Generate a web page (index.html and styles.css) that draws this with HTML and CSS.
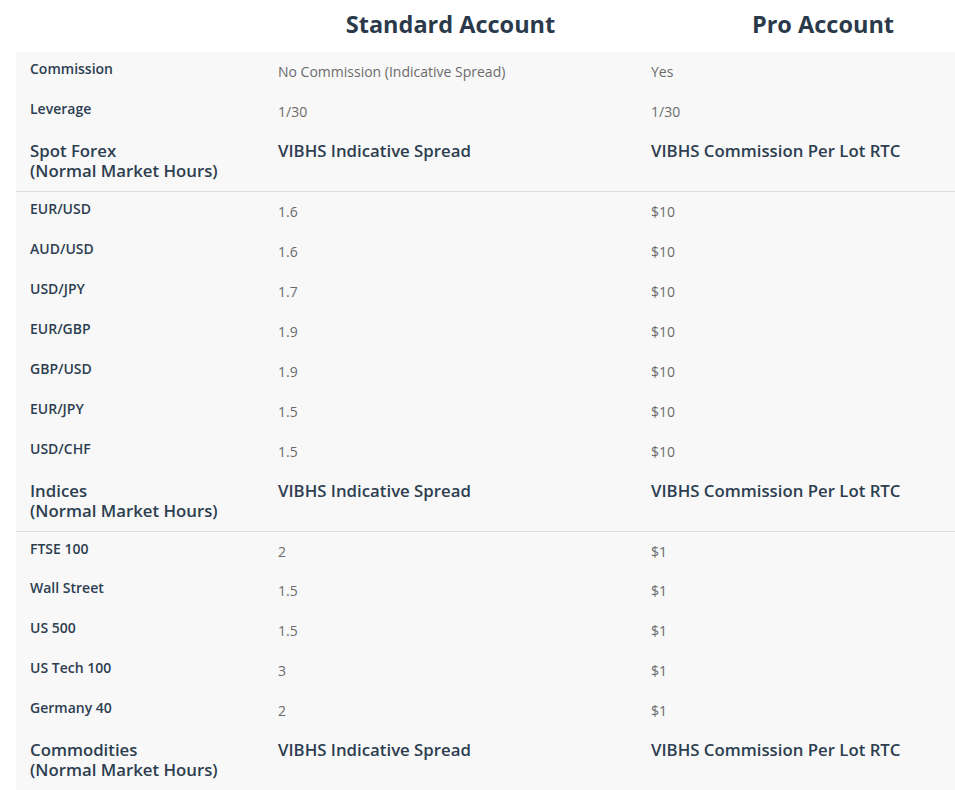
FILE: index.html
```html
<!DOCTYPE html>
<html lang="en">
<head>
<meta charset="utf-8">
<title>Account comparison</title>
<link rel="stylesheet" href="styles.css">
</head>
<body>
<div class="wrap">
<table class="cmp">
  <colgroup>
    <col class="c1"><col class="c2"><col class="c3">
  </colgroup>
  <thead>
    <tr class="titles">
      <th></th>
      <th>Standard Account</th>
      <th>Pro Account</th>
    </tr>
  </thead>
  <tbody>
    <tr><th>Commission</th><td>No Commission (Indicative Spread)</td><td>Yes</td></tr>
    <tr><th>Leverage</th><td>1/30</td><td>1/30</td></tr>
    <tr class="sec"><th>Spot Forex<br>(Normal Market Hours)</th><th>VIBHS Indicative Spread</th><th>VIBHS Commission Per Lot RTC</th></tr>
    <tr><th>EUR/USD</th><td>1.6</td><td>$10</td></tr>
    <tr><th>AUD/USD</th><td>1.6</td><td>$10</td></tr>
    <tr><th>USD/JPY</th><td>1.7</td><td>$10</td></tr>
    <tr><th>EUR/GBP</th><td>1.9</td><td>$10</td></tr>
    <tr><th>GBP/USD</th><td>1.9</td><td>$10</td></tr>
    <tr><th>EUR/JPY</th><td>1.5</td><td>$10</td></tr>
    <tr><th>USD/CHF</th><td>1.5</td><td>$10</td></tr>
    <tr class="sec"><th>Indices<br>(Normal Market Hours)</th><th>VIBHS Indicative Spread</th><th>VIBHS Commission Per Lot RTC</th></tr>
    <tr><th>FTSE 100</th><td>2</td><td>$1</td></tr>
    <tr><th>Wall Street</th><td>1.5</td><td>$1</td></tr>
    <tr><th>US 500</th><td>1.5</td><td>$1</td></tr>
    <tr><th>US Tech 100</th><td>3</td><td>$1</td></tr>
    <tr><th>Germany 40</th><td>2</td><td>$1</td></tr>
    <tr class="sec last"><th>Commodities<br>(Normal Market Hours)</th><th>VIBHS Indicative Spread</th><th>VIBHS Commission Per Lot RTC</th></tr>
  </tbody>
</table>
</div>
</body>
</html>
```
FILE: styles.css
```css
html, body {
  margin: 0;
  padding: 0;
  overflow: hidden;
  background: #ffffff;
}
body {
  font-family: "Open Sans", "Liberation Sans", sans-serif;
  color: #2d3e50;
}
.wrap {
  padding-left: 16px;
  width: 1100px;
}
.cmp {
  border-collapse: collapse;
  table-layout: fixed;
  width: 993px;
}
.c1 { width: 248px; }
.c2 { width: 373px; }
.c3 { width: 372px; }

.titles th {
  background: #ffffff;
  height: 52px;
  box-sizing: border-box;
  padding: 0 0 4px 0;
  font-size: 23.5px;
  font-weight: 700;
  text-align: center;
  vertical-align: middle;
  color: #2b3a4b;
  line-height: 30px;
}
tbody tr {
  background: #f8f8f8;
}
tbody th, tbody td {
  height: 40px;
  box-sizing: border-box;
  padding: 7px 10px 0 14px;
  text-align: left;
  vertical-align: top;
  line-height: 20px;
}
tbody th {
  font-size: 14px;
  font-weight: 600;
  color: #2d3e50;
}
tbody td {
  padding-top: 10px;
  font-size: 14px;
  font-weight: 400;
  color: #6b6b6b;
}
tbody tr.sec th {
  height: 59px;
  padding: 9px 10px 10px 14px;
  font-size: 16.8px;
  font-weight: 600;
  color: #2d3e50;
  border-bottom: 1px solid #dddddd;
}
tbody tr.sec.last th {
  border-bottom: none;
}
```
